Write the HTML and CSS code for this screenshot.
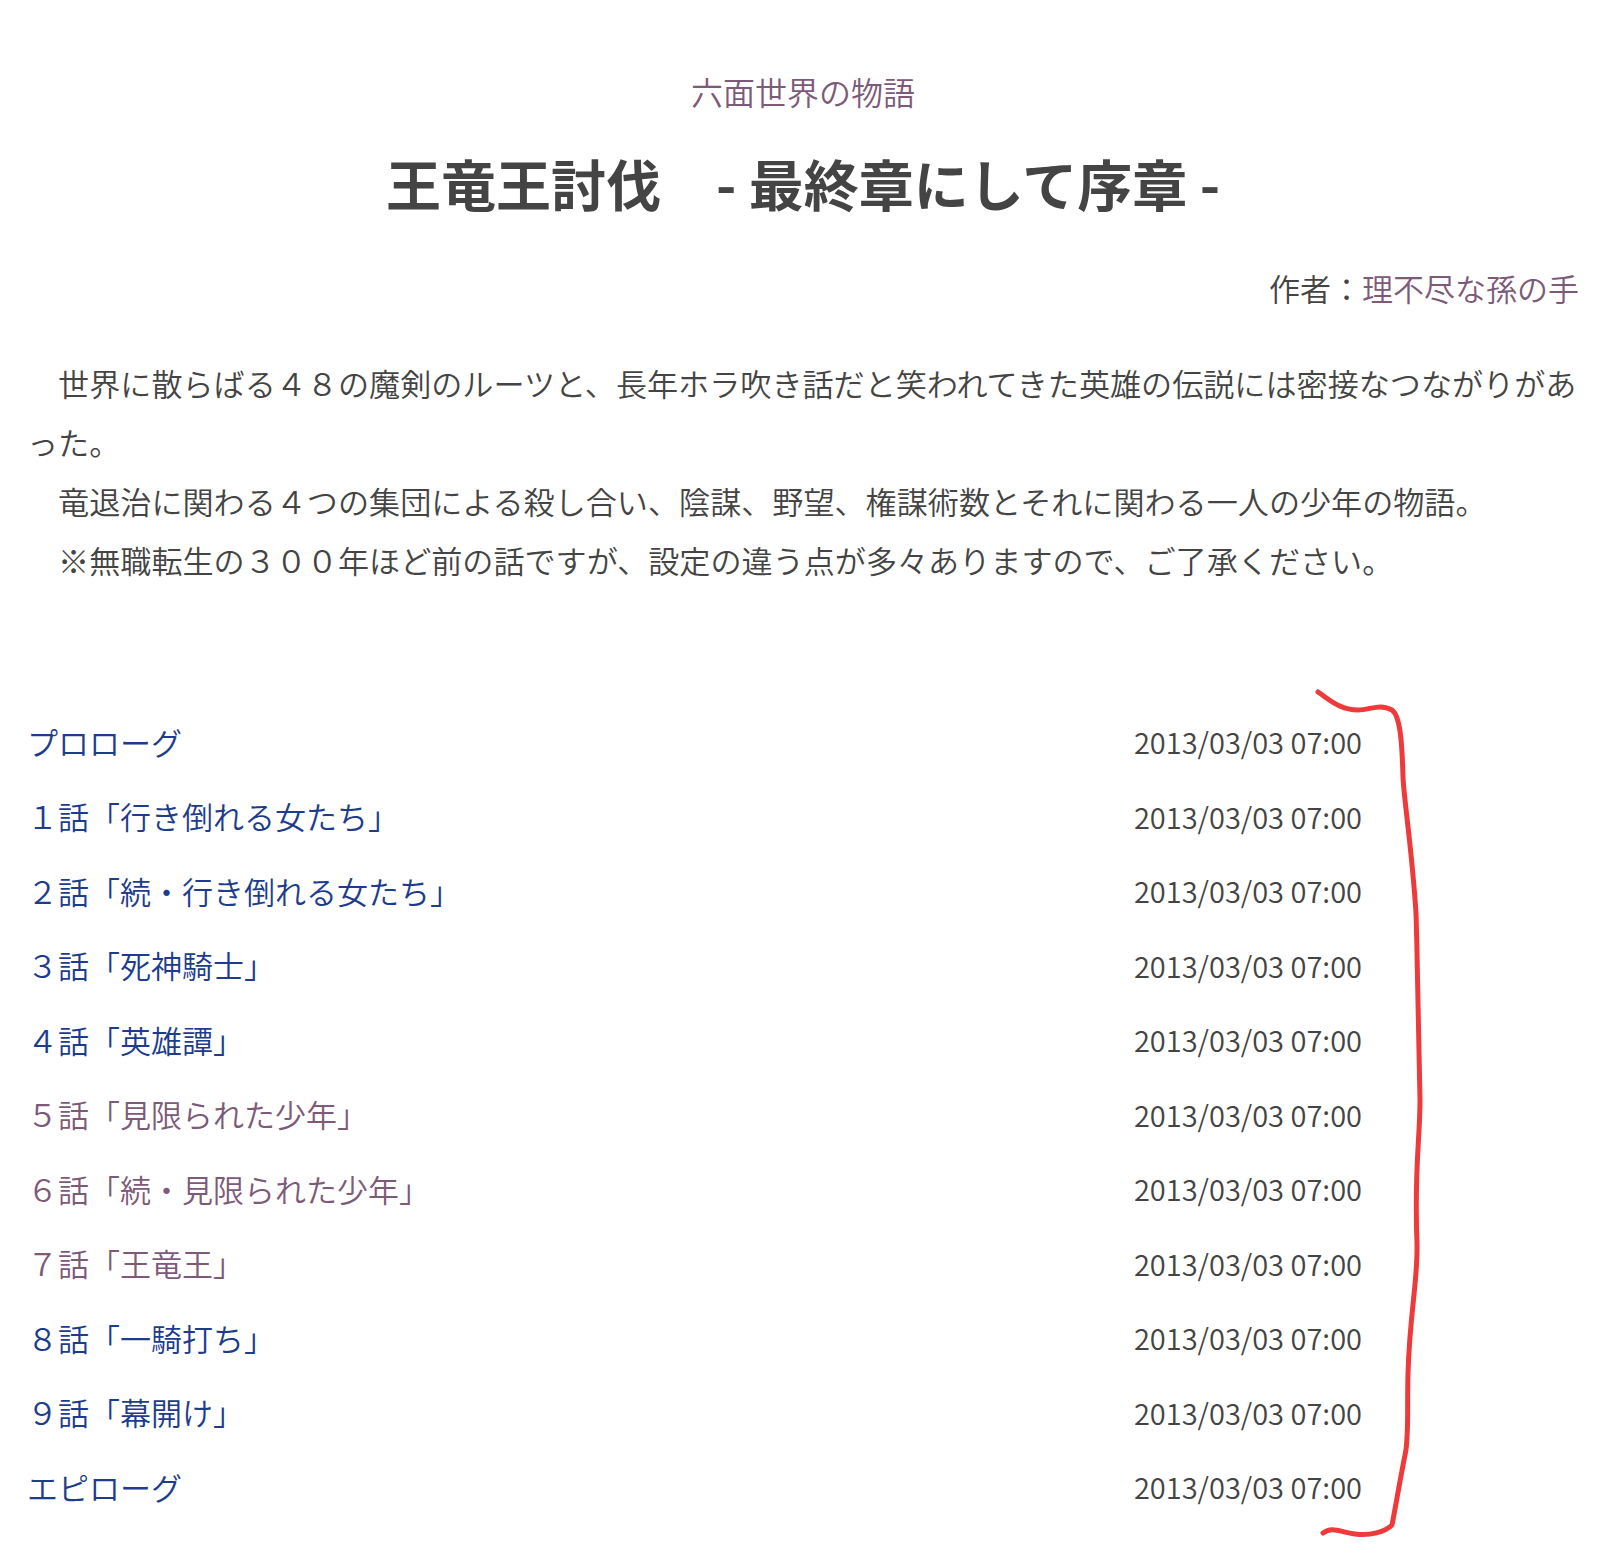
FILE: index.html
```html
<!DOCTYPE html>
<html lang="ja">
<head>
    <meta charset="UTF-8">
    <meta name="viewport" content="width=device-width, initial-scale=1.0">
    <title>王竜王討伐　- 最終章にして序章 -</title>
    <link rel="stylesheet" href="styles.css">
</head>
<body>
    <div class="novel">
        <p class="series"><a href="#" class="visited">六面世界の物語</a></p>
        <h1 class="novel-title">王竜王討伐　- 最終章にして序章 -</h1>
        <div class="author">作者：<a href="#" class="visited">理不尽な孫の手</a></div>

        <p class="summary">
            　世界に散らばる４８の魔剣のルーツと、長年ホラ吹き話だと笑われてきた英雄の伝説には密接なつながりがあった。<br>
            　竜退治に関わる４つの集団による殺し合い、陰謀、野望、権謀術数とそれに関わる一人の少年の物語。<br>
            　※無職転生の３００年ほど前の話ですが、設定の違う点が多々ありますので、ご了承ください。
        </p>

        <ul class="episodes">
            <li class="episode"><a href="#">プロローグ</a><span class="update">2013/03/03 07:00</span></li>
            <li class="episode"><a href="#">１話「行き倒れる女たち」</a><span class="update">2013/03/03 07:00</span></li>
            <li class="episode"><a href="#">２話「続・行き倒れる女たち」</a><span class="update">2013/03/03 07:00</span></li>
            <li class="episode"><a href="#">３話「死神騎士」</a><span class="update">2013/03/03 07:00</span></li>
            <li class="episode"><a href="#">４話「英雄譚」</a><span class="update">2013/03/03 07:00</span></li>
            <li class="episode"><a href="#" class="visited">５話「見限られた少年」</a><span class="update">2013/03/03 07:00</span></li>
            <li class="episode"><a href="#" class="visited">６話「続・見限られた少年」</a><span class="update">2013/03/03 07:00</span></li>
            <li class="episode"><a href="#" class="visited">７話「王竜王」</a><span class="update">2013/03/03 07:00</span></li>
            <li class="episode"><a href="#">８話「一騎打ち」</a><span class="update">2013/03/03 07:00</span></li>
            <li class="episode"><a href="#">９話「幕開け」</a><span class="update">2013/03/03 07:00</span></li>
            <li class="episode"><a href="#">エピローグ</a><span class="update">2013/03/03 07:00</span></li>
        </ul>
    </div>

    <!-- hand-drawn bracket around the update dates -->
    <svg class="scribble" width="1617" height="1563" viewBox="0 0 1617 1563">
        <path d="M1318 692 C1330 700, 1340 710, 1358 710 C1370 710, 1380 703, 1392 710 C1400 716, 1402 740, 1403 777 C1404 800, 1412 850, 1416 913 C1418 980, 1419 1050, 1420 1100 C1420 1140, 1414 1170, 1417 1243 C1418 1280, 1410 1310, 1408 1373 C1407 1410, 1409 1440, 1405 1455 C1400 1480, 1395 1510, 1392 1525 C1385 1532, 1370 1536, 1355 1534 C1340 1532, 1332 1526, 1323 1533"
              fill="none" stroke="#ee3a3a" stroke-width="5" stroke-linecap="round" stroke-linejoin="round"/>
    </svg>
</body>
</html>
```

FILE: styles.css
```css
* {
    margin: 0;
    padding: 0;
    box-sizing: border-box;
}

body {
    position: relative;
    background-color: #ffffff;
    color: #444444;
    font-family: "Noto Sans CJK JP", "Noto Sans", sans-serif;
    font-weight: 350;
}

a {
    color: #1d3c8c;
    text-decoration: none;
}

a.visited {
    color: #7c5a78;
}

.novel {
    padding: 67px 38px 40px 27px;
}

.series {
    font-size: 32px;
    line-height: 48px;
    text-align: center;
}

.novel-title {
    margin-top: 29px;
    font-size: 55px;
    line-height: 76px;
    font-weight: bold;
    text-align: center;
    color: #444444;
}

.author {
    margin-top: 45px;
    font-size: 31px;
    line-height: 46px;
    text-align: right;
}

.summary {
    margin-top: 42px;
    margin-right: -4px;
    font-size: 31.1px;
    line-height: 59px;
}

.episodes {
    list-style: none;
    margin-top: 115px;
    padding-right: 217px;
}

.episode {
    display: flex;
    justify-content: space-between;
    align-items: center;
    height: 74.5px;
    font-size: 31px;
}

.update {
    font-size: 29px;
    color: #444444;
}

.scribble {
    position: absolute;
    top: 0;
    left: 0;
    pointer-events: none;
}
```
